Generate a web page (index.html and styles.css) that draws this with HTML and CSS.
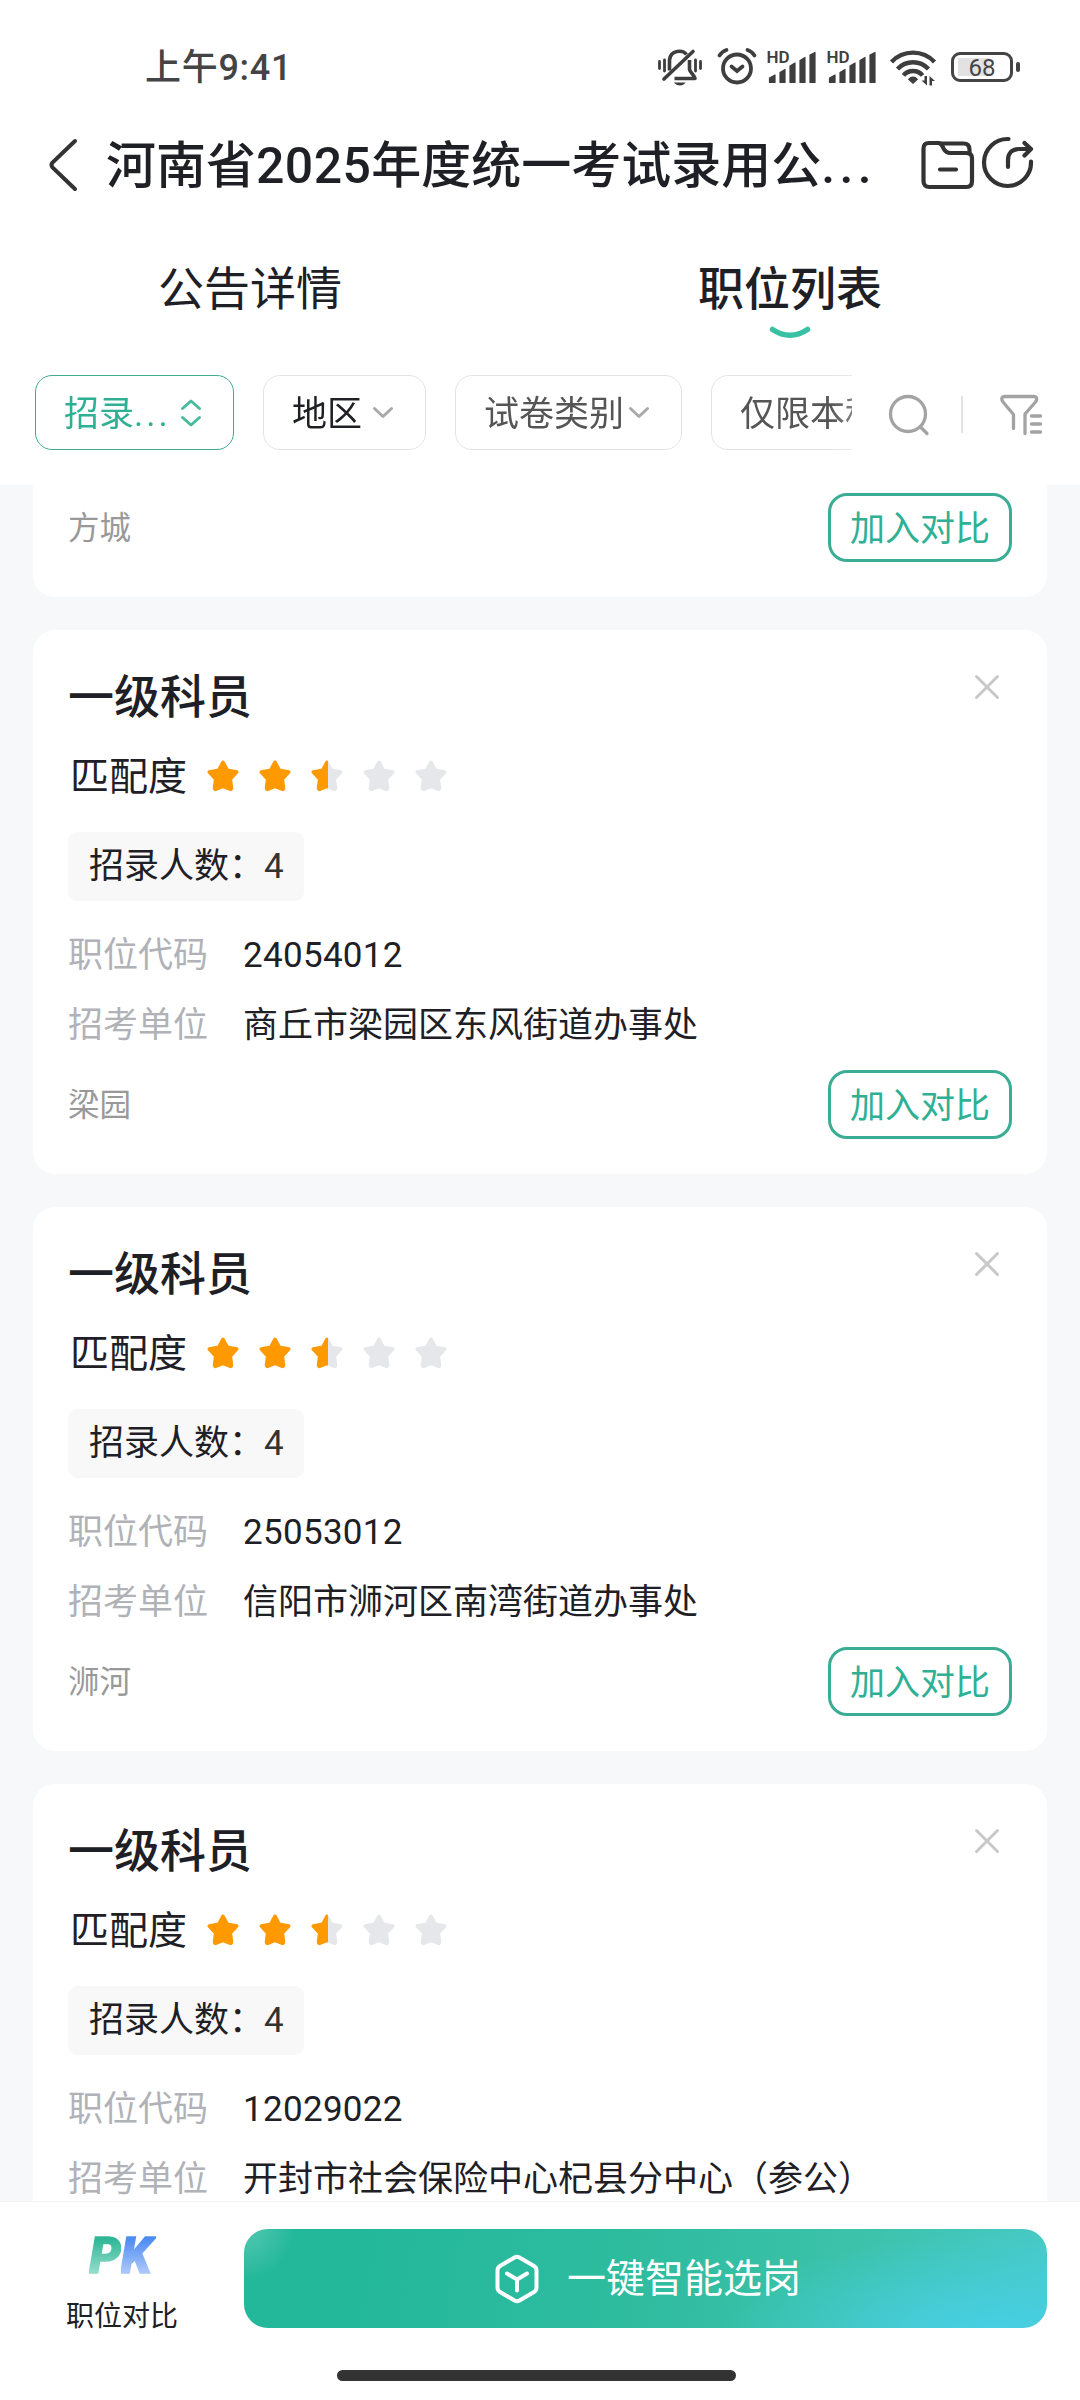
FILE: index.html
```html
<!DOCTYPE html>
<html lang="zh-CN">
<head>
<meta charset="utf-8">
<title>职位列表</title>
<link rel="stylesheet" href="styles.css">
</head>
<body>
<svg class="defs" width="0" height="0">
  <defs>
    <linearGradient id="half" gradientUnits="userSpaceOnUse" x1="0" y1="0" x2="32" y2="0"><stop offset="52%" stop-color="#ff9900"/><stop offset="52%" stop-color="#e6e7eb"/></linearGradient>
    <symbol id="star" viewBox="0 0 32 32"><path d="M16 2.300l4.300 8 9.400 1.700-6.400 7 1.200 9.300a1 1 0 0 1-1.500.9L16 26.300l-7 2.900a1 1 0 0 1-1.500-.9L8.700 19 2.300 12l9.400-1.700z" stroke-width="3.600" stroke-linejoin="round"/></symbol>
    <symbol id="down" viewBox="0 0 22 14"><path d="M2.500 2.500L11 10.500 19.500 2.500" fill="none" stroke="#a9a9a9" stroke-width="3" stroke-linecap="round" stroke-linejoin="round"/></symbol>
    <symbol id="close" viewBox="0 0 26 26"><path d="M2.500 2.500l21 21M23.500 2.500l-21 21" fill="none" stroke="#c8c8c8" stroke-width="3" stroke-linecap="round"/></symbol>
    <symbol id="signal" viewBox="0 0 50 40">
      <text x="-0.500" y="15.500" class="hd">HD</text>
      <path d="M2.500 35.500v-4.500l5.500-3v7.500zM13 35.500v-10l5-3v13zM23 35.500v-16.500l5-3v19.500zM33 35.500v-22l5-3v25zM43 35.500v-27.500l5-2.500v30z" fill="#3e3e3e" stroke="#3e3e3e" stroke-width="1.200" stroke-linejoin="round"/>
    </symbol>
  </defs>
</svg>

<div class="screen">
  <header class="top">
    <div class="status">
      <span class="time">上午9:41</span>
      <div class="status-icons">
        <svg class="ic-bell" viewBox="0 0 44 40" fill="none" stroke="#3e3e3e" stroke-width="3.600">
          <path d="M28.500 7.500C25 2.800 12.500 2.500 11.500 13v10.500"/>
          <path d="M6 32L35 4.500" stroke-linecap="round"/>
          <path d="M31.500 13v9c0 3 5.500 7 5.500 9.500H16.500" stroke-linejoin="round"/>
          <path d="M16 35.500h11.500c-2 4-9 4-11.500 0z" fill="#3e3e3e" stroke="none"/>
          <path d="M1.500 14.500v7M6.500 13v11M37.500 13v11M42.500 14.500v7" stroke-width="2.800" stroke-linecap="round"/>
        </svg>
        <svg class="ic-alarm" viewBox="0 0 40 40" fill="none" stroke="#3e3e3e" stroke-width="3.800" stroke-linecap="round">
          <circle cx="20" cy="21.500" r="14"/>
          <path d="M14.500 19.500l5.500 4.500 5.500-4.500M2.500 8.500Q5 4.500 9.500 3M37.500 8.500Q35 4.500 30.500 3"/>
        </svg>
        <svg class="ic-signal"><use href="#signal"/></svg>
        <svg class="ic-signal second"><use href="#signal"/></svg>
        <svg class="ic-wifi" viewBox="0 0 46 40" fill="none" stroke="#3e3e3e" stroke-width="4.400">
          <path d="M1.500 15C13 2.500 33 2.500 44.500 15M7.500 22C16 13 30 13 38.500 22M13.500 28.500C18 22.500 28 22.500 32.500 28.500"/>
          <path d="M18 32.500c2-4 8-4 10 0L23 37z" fill="#3e3e3e" stroke="none"/>
          <path d="M31.500 33.500h3v-4.500h2.500v9.500zM39.500 38.500V29l5.500 5h-3v4.500z" fill="#3e3e3e" stroke="none"/>
        </svg>
        <div class="battery"><span>68</span></div>
      </div>
    </div>

    <div class="titlebar">
      <svg class="back" viewBox="0 0 30 54"><path d="M27 3L4.500 24.500q-2 2.500 0 5L27 51" fill="none" stroke="#333" stroke-width="4" stroke-linecap="round"/></svg>
      <h1>河南省<b>2025</b>年度统一考试录用公<span>...</span></h1>
      <svg class="folder" viewBox="0 0 54 50" fill="none" stroke="#333" stroke-width="4.200" stroke-linejoin="round" stroke-linecap="round">
        <path d="M8 3h9.500c3 0 3.500 2.500 5 5.500 2 3.500 3.500 4.500 7 4.500H45c4 0 6 1.500 6 5v23c0 4-1.500 6-5.500 6H8.500c-4 0-6-2-6-6V8.500C2.500 5 4 3 8 3z"/>
        <path d="M19 3.500h23.500c4 0 6 2 6 6v4M19 29.500h16"/>
      </svg>
      <svg class="share" viewBox="0 0 52 52" fill="none" stroke="#333" stroke-width="4.200" stroke-linecap="round" stroke-linejoin="round">
        <path d="M26.500 3A23.500 23.500 0 1 0 49 25.500"/>
        <path d="M26 31v-7c0-7 4-11 11-11h10M42.500 7l6.500 6-6.500 6.500"/>
      </svg>
    </div>

    <nav class="tabs">
      <div class="tab">公告详情</div>
      <div class="tab active">职位列表<svg class="smile" viewBox="0 0 42 14"><path d="M3.500 3.500Q21 15 38.500 3.500" fill="none" stroke="#38c1a3" stroke-width="5.500" stroke-linecap="round"/></svg></div>
    </nav>

    <div class="filters">
      <div class="chips">
        <div class="chip selected">招录<span class="dots">...</span><svg viewBox="0 0 22 30" class="sort"><path d="M2.500 10.500L11 3l8.500 7.500M2.500 19.500L11 27l8.500-7.500" fill="none" stroke="#48bb9f" stroke-width="3" stroke-linecap="round" stroke-linejoin="round"/></svg></div>
        <div class="chip dark">地区<svg class="arrow"><use href="#down"/></svg></div>
        <div class="chip">试卷类别<svg class="arrow near"><use href="#down"/></svg></div>
        <div class="chip">仅限本科生</div>
      </div>
      <svg class="search" viewBox="0 0 42 42" fill="none" stroke="#a3a3a3" stroke-width="3.300" stroke-linecap="round"><circle cx="20" cy="20" r="17.500"/><path d="M32.500 33l6.500 6.500"/></svg>
      <i class="divider"></i>
      <svg class="funnel" viewBox="0 0 42 42" fill="none" stroke="#a3a3a3" stroke-width="3.300" stroke-linecap="round" stroke-linejoin="round">
        <path d="M13.500 34.500V20.500L3 8C1 5 1.500 2.500 5 2.500h28.500c3.500 0 4 2.500 2 5.500L25 20v19.500M31.500 22h9M31.500 30h9M31.500 38h9"/>
      </svg>
    </div>
  </header>

  <main class="list">
    <article class="card first">
      <div class="foot"><span class="loc">方城</span><button>加入对比</button></div>
    </article>

    <article class="card">
      <div class="head"><h2>一级科员</h2><svg class="close"><use href="#close"/></svg></div>
      <div class="match">匹配度<div class="stars"><svg class="on"><use href="#star"/></svg><svg class="on"><use href="#star"/></svg><svg class="half"><use href="#star"/></svg><svg><use href="#star"/></svg><svg><use href="#star"/></svg></div></div>
      <div class="count">招录人数：<b>4</b></div>
      <div class="row code"><span>职位代码</span>24054012</div>
      <div class="row unit"><span>招考单位</span>商丘市梁园区东风街道办事处</div>
      <div class="foot"><span class="loc">梁园</span><button>加入对比</button></div>
    </article>

    <article class="card">
      <div class="head"><h2>一级科员</h2><svg class="close"><use href="#close"/></svg></div>
      <div class="match">匹配度<div class="stars"><svg class="on"><use href="#star"/></svg><svg class="on"><use href="#star"/></svg><svg class="half"><use href="#star"/></svg><svg><use href="#star"/></svg><svg><use href="#star"/></svg></div></div>
      <div class="count">招录人数：<b>4</b></div>
      <div class="row code"><span>职位代码</span>25053012</div>
      <div class="row unit"><span>招考单位</span>信阳市浉河区南湾街道办事处</div>
      <div class="foot"><span class="loc">浉河</span><button>加入对比</button></div>
    </article>

    <article class="card">
      <div class="head"><h2>一级科员</h2><svg class="close"><use href="#close"/></svg></div>
      <div class="match">匹配度<div class="stars"><svg class="on"><use href="#star"/></svg><svg class="on"><use href="#star"/></svg><svg class="half"><use href="#star"/></svg><svg><use href="#star"/></svg><svg><use href="#star"/></svg></div></div>
      <div class="count">招录人数：<b>4</b></div>
      <div class="row code"><span>职位代码</span>12029022</div>
      <div class="row unit"><span>招考单位</span>开封市社会保险中心杞县分中心（参公）</div>
    </article>
  </main>

  <footer class="bottom">
    <div class="actions">
      <div class="compare">
        <div class="pk"><span class="p">P</span><span class="k">K</span></div>
        <div class="label">职位对比</div>
      </div>
      <div class="smart">
        <svg viewBox="0 0 44 50" fill="none" stroke="#fff" stroke-width="4" stroke-linecap="round" stroke-linejoin="round"><path d="M19.500 3.500q2.500-1.300 5 0L39 12q2.500 1.500 2.500 4.500v17q0 3-2.500 4.500L24.500 46.500q-2.500 1.300-5 0L5 38q-2.500-1.500-2.500-4.500v-17Q2.500 13.500 5 12z"/><path d="M12 19.500l10 6 10-6M22 25.500v11"/></svg>
        <span>一键智能选岗</span>
      </div>
    </div>
    <div class="homebar"></div>
  </footer>
</div>
</body>
</html>
```
FILE: styles.css
```css
* { box-sizing: border-box; }
body, h1, h2 { margin: 0; }
body {
  background: #fff;
  color: #1e2025;
  font-family: Roboto, "Noto Sans CJK SC", sans-serif;
  font-size: 35px;
}
svg { display: block; flex: none; overflow: visible; }
.defs { position: absolute; }
.screen {
  width: 1080px;
  height: 2400px;
  display: flex;
  flex-direction: column;
  overflow: hidden;
}
.top { flex: none; height: 485px; background: #fff; }

/* status bar */
.status {
  display: flex;
  justify-content: space-between;
  height: 115px;
  padding: 47px 60px 0 145px;
}
.time { font-size: 36px; line-height: 43px; font-weight: 500; letter-spacing: .7px; color: #444; }
.status-icons { display: flex; height: 40px; }
.status-icons svg { height: 40px; }
.ic-bell { width: 44px; margin-right: 15px; }
.ic-alarm { width: 40px; margin-right: 10px; }
.ic-signal { width: 50px; margin-right: 10px; }
.ic-signal.second { margin-right: 13px; }
.ic-wifi { width: 46px; margin-right: 15px; }
.hd { font: 600 17px Roboto, sans-serif; fill: #3e3e3e; }
.battery {
  position: relative;
  width: 62px;
  height: 30px;
  margin-top: 5px;
  margin-right: 7px;
  border: 3px solid #444;
  border-radius: 9px;
  padding: 3px 4px;
  background: linear-gradient(#e2e2e2, #e2e2e2) 4px 3px / 32px 18px no-repeat;
}
.battery::after {
  content: "";
  position: absolute;
  right: -10px;
  top: 7px;
  width: 4px;
  height: 10px;
  border-radius: 2px;
  background: #444;
}
.battery span { display: block; text-align: center; font-size: 24px; line-height: 20px; color: #444; }

/* title bar */
.titlebar { display: flex; align-items: center; height: 100px; padding: 0 43px 0 48px; }
.back { width: 30px; height: 54px; margin-right: 28px; }
h1 { font-size: 50px; line-height: 60px; font-weight: 500; white-space: nowrap; width: 815px; padding-top: 2px; }
h1 b { font-weight: 500; letter-spacing: .4px; }
h1 span { letter-spacing: 4.300px; }
.folder { width: 54px; height: 50px; margin-right: 7px; }
.share { width: 52px; height: 52px; margin-top: -6px; }

/* tabs */
.tabs { display: grid; grid-template-columns: 500px 580px; height: 160px; }
.tab {
  position: relative;
  padding-top: 44px;
  font-size: 46px;
  line-height: 60px;
  text-align: center;
}
.tab.active { font-weight: 500; }
.smile { position: absolute; left: 269px; top: 111px; width: 42px; height: 14px; }

/* filters */
.filters { display: flex; align-items: center; height: 75px; padding-left: 35px; }
.chips {
  width: 817px;
  display: flex;
  gap: 29px;
  overflow: hidden;
  -webkit-mask: linear-gradient(90deg, #000 795px, rgba(0, 0, 0, .75) 817px);
  mask: linear-gradient(90deg, #000 795px, rgba(0, 0, 0, .75) 817px);
}
.chip {
  flex: none;
  display: flex;
  align-items: center;
  height: 75px;
  padding: 4px 31px 0 28px;
  border: 1px solid #e3e3e3;
  border-radius: 17px;
  color: #555;
  line-height: 50px;
  white-space: nowrap;
}
.chip.selected { width: 199px; border-color: #40ab91; color: #2fb094; }
.chip.dark { color: #1e2025; }
.dots { letter-spacing: 3px; }
.chip svg { margin-top: -4px; }
.sort { width: 22px; height: 30px; margin-left: 9px; }
.arrow { width: 22px; height: 14px; margin-left: 10px; }
.arrow.near { margin-left: 4px; }
.search { width: 42px; height: 42px; margin-left: 36px; margin-top: 4px; }
.divider { width: 2px; height: 37px; margin-left: 31px; background: #e3e3e3; margin-top: 4px; }
.funnel { width: 42px; height: 42px; margin-left: 37px; margin-top: 4px; }

/* job cards */
.list {
  flex: 1;
  min-height: 0;
  overflow: hidden;
  display: flex;
  flex-direction: column;
  gap: 33px;
  padding: 0 33px;
  background: #f6f8fa;
}
.card { flex: none; height: 544px; padding: 36px 35px 0; background: #fff; border-radius: 22px; }
.card.first { height: 112px; padding-top: 8px; border-radius: 0 0 22px 22px; }
.head { display: flex; justify-content: space-between; height: 60px; }
h2 { font-size: 46px; line-height: 62px; font-weight: 500; }
.close { width: 26px; height: 26px; margin: 8px 12px 0 0; }
.match { display: flex; align-items: center; height: 50px; line-height: 50px; margin-top: 26px; font-size: 39px; padding-left: 2px; }
.stars { display: flex; gap: 20px; margin: -2px 0 0 20px; }
.stars svg { width: 32px; height: 32px; fill: #e6e7eb; stroke: #e6e7eb; }
.stars .on { fill: #ff9900; stroke: #ff9900; }
.stars .half { fill: url(#half); stroke: url(#half); }
.count {
  width: 236px;
  height: 69px;
  margin-top: 30px;
  padding-left: 21px;
  line-height: 70px;
  border-radius: 9px;
  background: #f8f8f8;
  white-space: nowrap;
}
.count b { font-weight: 400; color: #333; }
.row { display: flex; height: 50px; line-height: 53px; white-space: nowrap; }
.row span { width: 175px; color: #b0b2b8; }
.row.code { margin-top: 28px; letter-spacing: .3px; }
.row.code span { letter-spacing: 0; }
.row.unit { margin-top: 20px; }
.foot { display: flex; justify-content: space-between; align-items: center; height: 69px; margin-top: 21px; }
.card.first .foot { margin-top: 0; }
.loc { font-size: 31.500px; line-height: 40px; padding-top: 3px; color: #999; }
.foot button {
  width: 184px;
  height: 69px;
  padding: 0 0 4px;
  border: 3px solid #3aad94;
  border-radius: 19px;
  background: #fff;
  color: #2fb094;
  font: 35px "Noto Sans CJK SC", sans-serif;
  line-height: 58px;
}

/* bottom bar */
.bottom { flex: none; height: 199px; border-top: 1px solid #eff1f3; background: #fff; }
.actions { display: flex; height: 127px; padding: 27px 33px 0 0; }
.compare { width: 244px; text-align: center; }
.pk { display: flex; justify-content: center; height: 50px; padding-right: 3px; font: italic 900 50px/55px Roboto, sans-serif; }
.pk span { -webkit-background-clip: text; background-clip: text; color: transparent; -webkit-text-stroke: 1.500px transparent; }
.pk .p { background-image: linear-gradient(#2fb697 20%, #8fdcc8 85%); }
.pk .k { background-image: linear-gradient(#4d8cf2 20%, #a9c6fa 85%); padding-right: 4px; margin-right: -4px; }
.label { font-size: 28px; line-height: 40px; margin-top: 18px; }
.smart {
  flex: 1;
  height: 99px;
  display: flex;
  align-items: center;
  padding-left: 251px;
  border-radius: 24px;
  color: #fff;
  font-size: 39px;
  background:
    radial-gradient(circle at 0 0, rgba(255, 255, 255, .22), rgba(255, 255, 255, 0) 50px),
    radial-gradient(ellipse 270px 100px at 93% 105%, #47cfe4, rgba(71, 207, 228, 0)),
    linear-gradient(100deg, #24b89b 15%, #2fbc9f 50%, #3cc2aa 75%, #48cac8);
}
.smart svg { width: 44px; height: 50px; margin-right: 28px; }
.smart span { line-height: 50px; }
.homebar { width: 399px; height: 11px; margin: 41px 0 0 337px; border-radius: 6px; background: #333; }
```
